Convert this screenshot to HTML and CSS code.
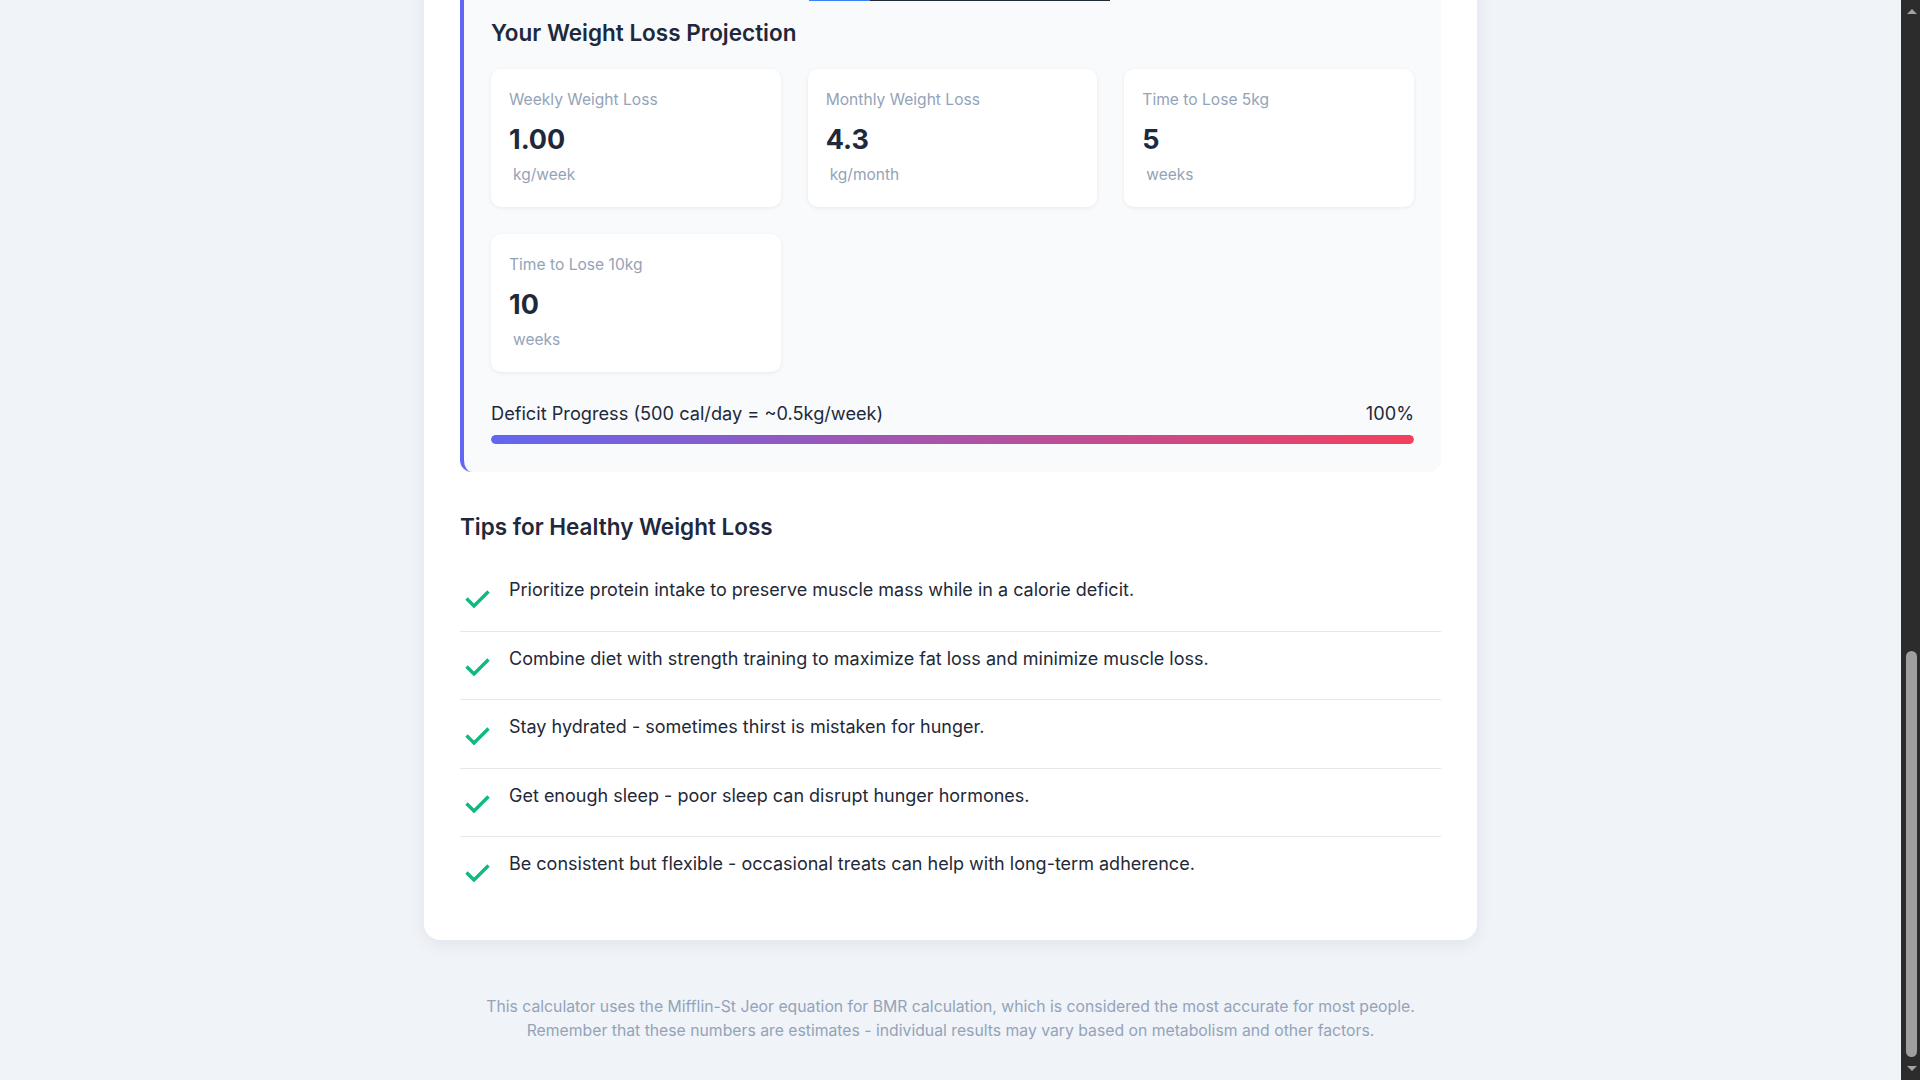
FILE: index.html
```html
<!DOCTYPE html>
<html lang="en">
<head>
<meta charset="utf-8">
<title>Calorie Deficit Calculator</title>
<link rel="stylesheet" href="styles.css">
</head>
<body>
<div class="page">
  <main class="card">
    <section class="projection">
      <div class="track"><div class="track-fill"></div></div>
      <h2 class="section-title">Your Weight Loss Projection</h2>
      <div class="stat-grid">
        <div class="stat"><div class="stat-label">Weekly Weight Loss</div><div class="stat-value">1.00</div><div class="stat-unit">kg/week</div></div>
        <div class="stat"><div class="stat-label">Monthly Weight Loss</div><div class="stat-value">4.3</div><div class="stat-unit">kg/month</div></div>
        <div class="stat"><div class="stat-label">Time to Lose 5kg</div><div class="stat-value">5</div><div class="stat-unit">weeks</div></div>
        <div class="stat"><div class="stat-label">Time to Lose 10kg</div><div class="stat-value">10</div><div class="stat-unit">weeks</div></div>
      </div>
      <div class="progress">
        <div class="progress-head"><span>Deficit Progress (500 cal/day = ~0.5kg/week)</span><span>100%</span></div>
        <div class="progress-bar"><div class="progress-fill" style="width: 100%"></div></div>
      </div>
    </section>

    <section class="tips">
      <h2 class="section-title">Tips for Healthy Weight Loss</h2>
      <ul class="tip-list">
        <li class="tip"><span class="tip-icon"><svg viewBox="0 0 25 18" width="25" height="18"><polyline points="1.5,8.5 9,16 23.5,1.5" fill="none" stroke="#10b981" stroke-width="3.4"/></svg></span><span class="tip-text">Prioritize protein intake to preserve muscle mass while in a calorie deficit.</span></li>
        <li class="tip"><span class="tip-icon"><svg viewBox="0 0 25 18" width="25" height="18"><polyline points="1.5,8.5 9,16 23.5,1.5" fill="none" stroke="#10b981" stroke-width="3.4"/></svg></span><span class="tip-text">Combine diet with strength training to maximize fat loss and minimize muscle loss.</span></li>
        <li class="tip"><span class="tip-icon"><svg viewBox="0 0 25 18" width="25" height="18"><polyline points="1.5,8.5 9,16 23.5,1.5" fill="none" stroke="#10b981" stroke-width="3.4"/></svg></span><span class="tip-text">Stay hydrated - sometimes thirst is mistaken for hunger.</span></li>
        <li class="tip"><span class="tip-icon"><svg viewBox="0 0 25 18" width="25" height="18"><polyline points="1.5,8.5 9,16 23.5,1.5" fill="none" stroke="#10b981" stroke-width="3.4"/></svg></span><span class="tip-text">Get enough sleep - poor sleep can disrupt hunger hormones.</span></li>
        <li class="tip"><span class="tip-icon"><svg viewBox="0 0 25 18" width="25" height="18"><polyline points="1.5,8.5 9,16 23.5,1.5" fill="none" stroke="#10b981" stroke-width="3.4"/></svg></span><span class="tip-text">Be consistent but flexible - occasional treats can help with long-term adherence.</span></li>
      </ul>
    </section>
  </main>

  <footer class="note">
    <p>This calculator uses the Mifflin-St Jeor equation for BMR calculation, which is considered the most accurate for most people.<br>Remember that these numbers are estimates - individual results may vary based on metabolism and other factors.</p>
  </footer>
</div>

<div class="scrollbar" aria-hidden="true">
  <span class="scroll-arrow scroll-up"></span>
  <span class="scroll-thumb"></span>
  <span class="scroll-arrow scroll-down"></span>
</div>
</body>
</html>
```

FILE: styles.css
```css
* {
  box-sizing: border-box;
}

html {
  background: #f0f3f8;
}

body {
  margin: 0;
  padding-right: 19px;
  font-family: Inter, "Noto Sans", sans-serif;
  color: #1e293b;
  background: #f0f3f8;
  overflow: hidden;
}

.page {
  max-width: 1053px;
  margin: 0 auto;
  padding: 0 0 36px;
}

.card {
  margin-top: -65px;
  background: #ffffff;
  border-radius: 16px;
  box-shadow: 0 4px 18px rgba(15, 23, 42, 0.07);
  padding: 36px 36px 35px;
}

.section-title {
  margin: 0 0 21px;
  font-size: 22.5px;
  line-height: 30px;
  font-weight: 600;
  color: #1e293b;
}

/* projection */
.projection {
  background: #f8fafc;
  border-left: 4px solid #6366f1;
  border-radius: 12px;
  padding: 28px 27px;
}

.track {
  margin: 0 0 17px 318px;
  width: 301px;
  height: 2px;
  background: #1f2937;
}

.track-fill {
  width: 61px;
  height: 100%;
  background: #3b82f6;
}

.stat-grid {
  display: grid;
  grid-template-columns: repeat(3, 1fr);
  gap: 27px;
}

.stat {
  background: #ffffff;
  border-radius: 10px;
  padding: 20px 18px 21px;
  box-shadow: 0 1px 4px rgba(15, 23, 42, 0.07);
}

.stat-label {
  font-size: 15.6px;
  line-height: 22px;
  color: #94a3b8;
}

.stat-value {
  margin-top: 12px;
  font-size: 27px;
  line-height: 34px;
  font-weight: 700;
  color: #1e293b;
}

.stat-unit {
  margin-top: 7px;
  padding-left: 4px;
  font-size: 15.5px;
  line-height: 22px;
  color: #94a3b8;
}

.progress {
  margin-top: 29px;
}

.progress-head {
  display: flex;
  justify-content: space-between;
  font-size: 18.2px;
  line-height: 24px;
  color: #1e293b;
}

.progress-bar {
  margin-top: 10px;
  height: 9px;
  border-radius: 5px;
  background: #e2e8f0;
  overflow: hidden;
}

.progress-fill {
  height: 100%;
  border-radius: 5px;
  background: linear-gradient(90deg, #6366f1, #f43f5e);
}

/* tips */
.tips {
  margin-top: 40px;
}

.tip-list {
  list-style: none;
  margin: 0;
  padding: 0;
}

.tip {
  display: flex;
  align-items: flex-start;
  gap: 15px;
  padding: 14px 0 14.5px;
  border-bottom: 1px solid #e5e7eb;
}

.tip:last-child {
  border-bottom: 0;
}

.tip-icon {
  flex: none;
  width: 34px;
  height: 35px;
  margin-top: 4px;
  padding-left: 4.5px;
  display: flex;
  align-items: center;
}

.tip-text {
  font-size: 18px;
  line-height: 26px;
  color: #1f2937;
}

/* footer */
.note {
  margin-top: 55px;
  text-align: center;
}

.note p {
  margin: 0;
  font-size: 15.75px;
  line-height: 24.5px;
  color: #94a3b8;
}

/* browser scrollbar (drawn over the right edge) */
.scrollbar {
  position: fixed;
  top: 0;
  right: 0;
  bottom: 0;
  width: 19px;
  background: #2c2c2c;
}

.scroll-thumb {
  position: absolute;
  left: 5px;
  top: 651px;
  width: 11px;
  height: 406px;
  border-radius: 6px;
  background: #9f9f9f;
}

.scroll-arrow {
  position: absolute;
  left: 6px;
  width: 0;
  height: 0;
  border-left: 5px solid transparent;
  border-right: 5px solid transparent;
}

.scroll-up {
  top: 9px;
  border-bottom: 5px solid #a3a3a3;
}

.scroll-down {
  bottom: 9px;
  border-top: 5px solid #a3a3a3;
}
```
